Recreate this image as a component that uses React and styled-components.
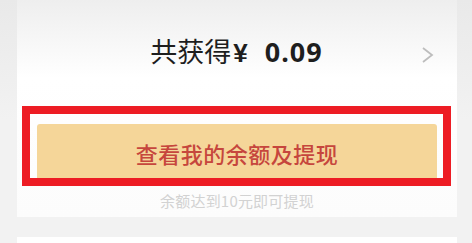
import styled, { createGlobalStyle } from 'styled-components'

const GlobalStyle = createGlobalStyle`
	html, body {
		margin: 0;
		padding: 0;
		background: #f1f1f1;
		font-family: 'Noto Sans CJK SC', 'Noto Sans', sans-serif;
	}
`

const Page = styled.div`
	width: 472px;
	height: 243px;
	overflow: hidden;
	padding: 0 15px 0 17px;
	box-sizing: border-box;
	display: flex;
	flex-direction: column;
	gap: 20px;
	background: linear-gradient(#e9e9e9, #f2f2f2 120px);
`

const Card = styled.section`
	width: 440px;
	height: 217px;
	flex-shrink: 0;
	box-sizing: border-box;
	padding: 0 20px;
	background: linear-gradient(#eeeeee 0, #ffffff 78px, #fcfcfc 100%);
	display: flex;
	flex-direction: column;
	position: relative;
`

const NextCard = styled.div`
	width: 440px;
	height: 40px;
	flex-shrink: 0;
	background: #fff;
`

const TotalRow = styled.div`
	height: 124px;
	box-sizing: border-box;
	padding-bottom: 22px;
	display: flex;
	align-items: center;
	justify-content: center;
	position: relative;
`

const Total = styled.p`
	margin: 0;
	font-size: 27px;
	font-weight: 400;
	color: #1e1e1e;
	line-height: 1;
	display: flex;
	align-items: baseline;
	margin-left: -1px;
	.yen {
		font-weight: 700;
		font-family: 'Liberation Sans', sans-serif;
		font-size: 26px;
		margin: 0 17px 0 2px;
	}
	.num {
		font-weight: 700;
		font-family: 'Noto Sans', sans-serif;
		font-size: 27px;
		letter-spacing: 1px;
	}
`

const Chevron = styled.svg`
	position: absolute;
	right: 2px;
	top: 46px;
	width: 14px;
	height: 18px;
`

const ButtonWrap = styled.div`
	position: relative;
`

const Button = styled.button`
	width: 100%;
	height: 58px;
	border: none;
	border-radius: 3px;
	background: #f5d699;
	color: #c6463d;
	font-family: 'Noto Sans CJK SC', sans-serif;
	font-size: 22px;
	font-weight: 500;
	letter-spacing: 0.5px;
	padding: 0;
	display: flex;
	align-items: center;
	justify-content: center;
`

const Highlight = styled.div`
	position: absolute;
	left: -15px;
	right: -14px;
	top: -18px;
	height: 80px;
	box-sizing: border-box;
	border: 8px solid #ed1c24;
	pointer-events: none;
`

const Hint = styled.p`
	margin: 9px 0 0;
	text-align: center;
	font-size: 15px;
	line-height: 20px;
	letter-spacing: 0.2px;
	color: #d2d2d2;
`

export default function App() {
	return (
		<>
			<GlobalStyle />
			<Page>
				<Card>
					<TotalRow>
						<Total>
							<span>共获得</span>
							<span className='yen'>¥</span>
							<span className='num'>0.09</span>
						</Total>
						<Chevron viewBox='0 0 14 18'>
							<path d='M2 2 L11 9 L2 16' fill='none' stroke='#bdbdbd' strokeWidth='1.8' />
						</Chevron>
					</TotalRow>
					<ButtonWrap>
						<Button>查看我的余额及提现</Button>
						<Highlight />
					</ButtonWrap>
					<Hint>余额达到10元即可提现</Hint>
				</Card>
				<NextCard />
			</Page>
		</>
	)
}
